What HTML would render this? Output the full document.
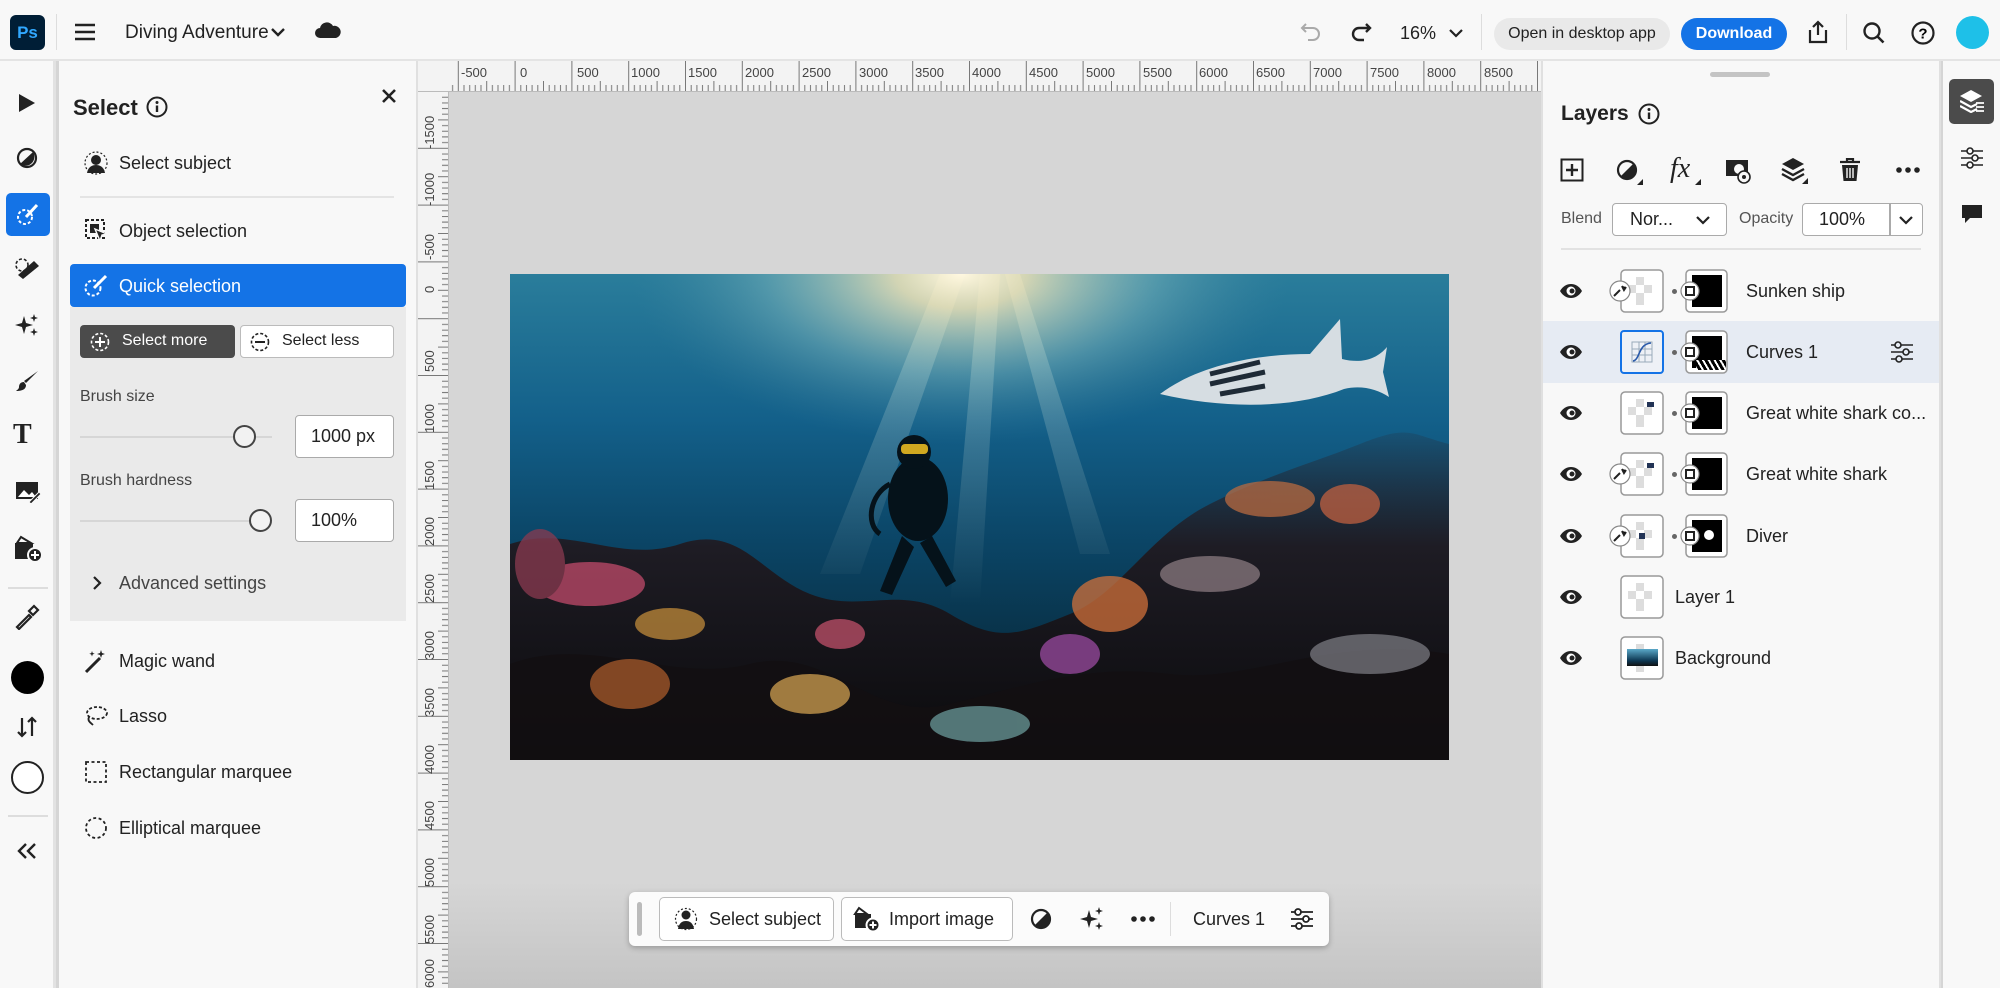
<!DOCTYPE html>
<html><head><meta charset="utf-8"><style>
*{box-sizing:border-box;margin:0;padding:0}
body{width:2000px;height:988px;overflow:hidden;background:#d5d5d5;font-family:"Liberation Sans",sans-serif;color:#222;position:relative}
.a{position:absolute}
.t{font-size:18px;color:#222;white-space:nowrap}
svg{display:block}
.ic{position:absolute}
</style></head><body>

<!-- top bar -->
<div class="a" style="left:0;top:0;width:2000px;height:61px;background:#f8f8f8;border-bottom:2px solid #e4e4e4"></div>
<div class="a" style="left:10px;top:15px;width:35px;height:35px;background:#001e36;border-radius:6px;color:#31a8ff;font-weight:bold;font-size:17px;line-height:35px;text-align:center">Ps</div>
<div class="a" style="left:56px;top:14px;width:1px;height:36px;background:#ddd"></div>
<svg class="ic" style="left:74px;top:22px" width="22" height="20"><path d="M1 3h20M1 10h20M1 17h20" stroke="#222" stroke-width="2.4"/></svg>
<div class="a t" style="left:125px;top:22px;font-size:19px">Diving Adventure</div>
<svg class="ic" style="left:271px;top:27px" width="14" height="10"><path d="M1 2l6 6 6-6" stroke="#222" stroke-width="2.4" fill="none"/></svg>
<svg class="ic" style="left:315px;top:21px" width="26" height="18"><path d="M5 17a5 5 0 010-10a7 7 0 0113-2a5 5 0 013 12z" fill="#222"/></svg>

<svg class="ic" style="left:1300px;top:22px" width="22" height="20"><path d="M6 2L2 6l4 4M2 6h11a6 6 0 010 12H8" stroke="#aaa" stroke-width="2" fill="none"/></svg>
<svg class="ic" style="left:1350px;top:22px" width="22" height="20"><path d="M16 2l4 4-4 4M20 6H9a6 6 0 000 12h5" stroke="#222" stroke-width="2.4" fill="none"/></svg>
<div class="a t" style="left:1400px;top:23px">16%</div>
<svg class="ic" style="left:1449px;top:28px" width="14" height="10"><path d="M1 2l6 6 6-6" stroke="#222" stroke-width="2.2" fill="none"/></svg>
<div class="a" style="left:1481px;top:14px;width:1px;height:36px;background:#ddd"></div>
<div class="a" style="left:1494px;top:18px;width:176px;height:32px;background:#e9e9e9;border-radius:16px;font-size:16px;line-height:32px;text-align:center;color:#222">Open in desktop app</div>
<div class="a" style="left:1681px;top:18px;width:106px;height:32px;background:#1473e6;border-radius:16px;font-size:16px;line-height:32px;text-align:center;color:#fff;font-weight:bold">Download</div>
<svg class="ic" style="left:1806px;top:20px" width="24" height="24"><path d="M12 15V2M7 7l5-5 5 5M4 10v12h16V10" stroke="#222" stroke-width="2.2" fill="none"/></svg>
<div class="a" style="left:1846px;top:14px;width:1px;height:36px;background:#ddd"></div>
<svg class="ic" style="left:1862px;top:21px" width="24" height="24"><circle cx="10" cy="10" r="7.5" stroke="#222" stroke-width="2.4" fill="none"/><path d="M15.5 15.5l6 6" stroke="#222" stroke-width="2.6"/></svg>
<svg class="ic" style="left:1911px;top:21px" width="24" height="24"><circle cx="12" cy="12" r="10.5" stroke="#222" stroke-width="2.2" fill="none"/><text x="12" y="17.5" font-size="15" font-weight="bold" text-anchor="middle" font-family="Liberation Sans">?</text></svg>
<div class="a" style="left:1956px;top:16px;width:33px;height:33px;border-radius:50%;background:#1ec0e8"></div>

<!-- left toolbar -->
<div class="a" style="left:0;top:61px;width:56px;height:927px;background:#f8f8f8;border-right:3px solid #e2e2e2"></div>
<div class="a" style="left:6px;top:193px;width:44px;height:43px;background:#1473e6;border-radius:5px"></div>
<svg class="ic" style="left:16px;top:92px" width="22" height="22"><path d="M3 2l16 9-16 9z" fill="#222"/></svg>
<svg class="ic" style="left:15px;top:147px" width="24" height="22"><circle cx="12" cy="11" r="9" stroke="#222" stroke-width="2.2" fill="none"/><path d="M5 17L18 5a9 9 0 01-13 12z" fill="#222"/></svg>
<svg class="ic" style="left:15px;top:202px" width="26" height="26"><circle cx="10" cy="15" r="7" stroke="#fff" stroke-width="2" stroke-dasharray="3 2" fill="none"/><path d="M22 3L11 15" stroke="#fff" stroke-width="3"/></svg>
<svg class="ic" style="left:14px;top:257px" width="28" height="24"><path d="M4 18L20 4l5 5L9 22z" fill="#222"/><circle cx="8" cy="8" r="6" stroke="#222" stroke-width="1.6" stroke-dasharray="3 2" fill="none"/></svg>
<svg class="ic" style="left:15px;top:313px" width="26" height="24"><path d="M9 3l2 7 7 2-7 2-2 7-2-7-7-2 7-2z M19 1l1 3 3 1-3 1-1 3-1-3-3-1 3-1z M19 15l1 3 3 1-3 1-1 3-1-3-3-1 3-1z" fill="#222"/></svg>
<svg class="ic" style="left:15px;top:369px" width="26" height="24"><path d="M23 2L11 14l-2-2z M9 13c-4 0-5 3-5 5s-2 3-3 4c5 0 10-1 10-6z" fill="#222"/></svg>
<div class="a" style="left:13px;top:419px;font-family:'Liberation Serif',serif;font-weight:bold;font-size:28px;color:#222">T</div>
<svg class="ic" style="left:14px;top:479px" width="28" height="24"><rect x="2" y="3" width="22" height="17" fill="#222"/><path d="M4 18l6-7 5 5 3-3 4 5z" fill="#fff"/><path d="M15 23l10-10 2 2-10 10z" fill="#222" stroke="#f8f8f8"/></svg>
<svg class="ic" style="left:13px;top:535px" width="30" height="28"><path d="M2 8h18v16H2z" fill="#222"/><path d="M8 2l10 6H4z" fill="none" stroke="#222" stroke-width="2"/><circle cx="22" cy="20" r="7" fill="#222" stroke="#f8f8f8" stroke-width="2"/><path d="M22 16v8M18 20h8" stroke="#fff" stroke-width="2"/></svg>
<div class="a" style="left:8px;top:587px;width:40px;height:2px;background:#ddd"></div>
<svg class="ic" style="left:14px;top:604px" width="26" height="26"><path d="M3 23l12-12 2 2L5 25zM15 7l4 4 5-5-4-4z" fill="none" stroke="#222" stroke-width="2.2"/></svg>
<div class="a" style="left:11px;top:661px;width:33px;height:33px;border-radius:50%;background:#000"></div>
<svg class="ic" style="left:16px;top:716px" width="22" height="22"><path d="M6 2v18M2 16l4 4 4-4M16 20V2M12 6l4-4 4 4" stroke="#222" stroke-width="2.2" fill="none"/></svg>
<div class="a" style="left:11px;top:761px;width:33px;height:33px;border-radius:50%;border:2px solid #222;background:#fff"></div>
<div class="a" style="left:8px;top:815px;width:40px;height:2px;background:#ddd"></div>
<svg class="ic" style="left:16px;top:842px" width="22" height="18"><path d="M10 2L3 9l7 7M19 2l-7 7 7 7" stroke="#222" stroke-width="2.4" fill="none"/></svg>

<!-- select panel -->
<div class="a" style="left:59px;top:61px;width:359px;height:927px;background:#f8f8f8;border-right:2px solid #e0e0e0"></div>
<div class="a" style="left:73px;top:95px;font-size:22px;font-weight:bold;color:#222">Select</div>
<svg class="ic" style="left:146px;top:96px" width="22" height="22"><circle cx="11" cy="11" r="9.5" stroke="#222" stroke-width="2" fill="none"/><circle cx="11" cy="6.5" r="1.5" fill="#222"/><path d="M11 9.5v6.5" stroke="#222" stroke-width="2.4"/></svg>
<svg class="ic" style="left:381px;top:88px" width="16" height="16"><path d="M2 2l12 12M14 2L2 14" stroke="#222" stroke-width="2.6"/></svg>

<svg class="ic" style="left:83px;top:151px" width="26" height="24"><circle cx="13" cy="9" r="5" fill="#222"/><path d="M4 22c1-6 5-8 9-8s8 2 9 8z" fill="#222"/><circle cx="13" cy="12" r="11" stroke="#222" stroke-width="1.2" stroke-dasharray="2 2" fill="none"/></svg>
<div class="a t" style="left:119px;top:153px">Select subject</div>
<div class="a" style="left:80px;top:196px;width:314px;height:2px;background:#e4e4e4"></div>
<svg class="ic" style="left:84px;top:218px" width="26" height="26"><rect x="2" y="2" width="18" height="18" stroke="#222" stroke-width="2" stroke-dasharray="3 2" fill="none"/><rect x="6" y="6" width="9" height="9" fill="#222"/><path d="M11 11l12 5-5 1-2 6z" fill="#222" stroke="#f8f8f8" stroke-width="1.4"/></svg>
<div class="a t" style="left:119px;top:221px">Object selection</div>

<div class="a" style="left:70px;top:264px;width:336px;height:43px;background:#1473e6;border-radius:4px"></div>
<svg class="ic" style="left:83px;top:273px" width="26" height="26"><circle cx="10" cy="15" r="7.5" stroke="#fff" stroke-width="2" stroke-dasharray="3 2" fill="none"/><path d="M23 3L11 15" stroke="#fff" stroke-width="3"/></svg>
<div class="a t" style="left:119px;top:276px;color:#fff">Quick selection</div>
<div class="a" style="left:70px;top:307px;width:336px;height:314px;background:#eaeaea"></div>
<div class="a" style="left:80px;top:325px;width:155px;height:33px;background:#4b4b4b;border-radius:4px"></div>
<svg class="ic" style="left:90px;top:332px" width="20" height="20"><circle cx="10" cy="10" r="8.5" stroke="#fff" stroke-width="1.6" stroke-dasharray="3 2" fill="none"/><path d="M10 5v10M5 10h10" stroke="#fff" stroke-width="2"/></svg>
<div class="a" style="left:122px;top:332px;font-size:16px;color:#fff">Select more</div>
<div class="a" style="left:240px;top:325px;width:154px;height:33px;background:#fff;border:1.5px solid #bbb;border-radius:4px"></div>
<svg class="ic" style="left:250px;top:332px" width="20" height="20"><circle cx="10" cy="10" r="8.5" stroke="#222" stroke-width="1.6" stroke-dasharray="3 2" fill="none"/><path d="M5 10h10" stroke="#222" stroke-width="2"/></svg>
<div class="a" style="left:282px;top:332px;font-size:16px;color:#222">Select less</div>

<div class="a" style="left:80px;top:388px;font-size:16px;color:#444">Brush size</div>
<div class="a" style="left:80px;top:436px;width:192px;height:2px;background:#d6d6d6"></div>
<div class="a" style="left:233px;top:425px;width:23px;height:23px;border-radius:50%;border:2.5px solid #444;background:#f2f2f2"></div>
<div class="a" style="left:295px;top:415px;width:99px;height:43px;background:#fff;border:1.5px solid #aaa;border-radius:4px;font-size:18px;line-height:40px;padding-left:15px">1000 px</div>
<div class="a" style="left:80px;top:472px;font-size:16px;color:#444">Brush hardness</div>
<div class="a" style="left:80px;top:520px;width:180px;height:2px;background:#d6d6d6"></div>
<div class="a" style="left:249px;top:509px;width:23px;height:23px;border-radius:50%;border:2.5px solid #444;background:#f2f2f2"></div>
<div class="a" style="left:295px;top:499px;width:99px;height:43px;background:#fff;border:1.5px solid #aaa;border-radius:4px;font-size:18px;line-height:40px;padding-left:15px">100%</div>
<svg class="ic" style="left:92px;top:575px" width="10" height="16"><path d="M2 2l6 6-6 6" stroke="#222" stroke-width="2.2" fill="none"/></svg>
<div class="a t" style="left:119px;top:573px;color:#444">Advanced settings</div>

<svg class="ic" style="left:83px;top:648px" width="26" height="26"><path d="M3 24L17 10" stroke="#222" stroke-width="3"/><path d="M18 2l1 3 3 1-3 1-1 3-1-3-3-1 3-1z M9 3l.7 2 2 .7-2 .7L9 8.5l-.7-2-2-.7 2-.7z" fill="#222"/></svg>
<div class="a t" style="left:119px;top:651px">Magic wand</div>
<svg class="ic" style="left:83px;top:704px" width="26" height="24"><ellipse cx="14" cy="9" rx="10" ry="6" stroke="#222" stroke-width="1.8" stroke-dasharray="3 2" fill="none"/><path d="M6 13c-2 4 2 6 4 8" stroke="#222" stroke-width="1.8" fill="none"/></svg>
<div class="a t" style="left:119px;top:706px">Lasso</div>
<svg class="ic" style="left:84px;top:760px" width="24" height="24"><rect x="2" y="2" width="20" height="20" stroke="#222" stroke-width="1.8" stroke-dasharray="3 2.5" fill="none"/></svg>
<div class="a t" style="left:119px;top:762px">Rectangular marquee</div>
<svg class="ic" style="left:84px;top:816px" width="24" height="24"><circle cx="12" cy="12" r="10" stroke="#222" stroke-width="1.8" stroke-dasharray="3 2.5" fill="none"/></svg>
<div class="a t" style="left:119px;top:818px">Elliptical marquee</div>

<!-- rulers -->
<div class="a" style="left:418px;top:61px;width:1123px;height:31px;background:#f3f3f3;border-bottom:1px solid #bbb;overflow:hidden">
<svg width="1123" height="31" style="position:absolute;left:0;top:0">
<defs><pattern id="rh" x="-17" y="0" width="56.8" height="31" patternUnits="userSpaceOnUse"><path d="M0.5 0v31M6.2 24v7M11.9 24v7M17.5 24v7M23.2 24v7M28.9 20v11M34.6 24v7M40.2 24v7M45.9 24v7M51.6 24v7" stroke="#777" stroke-width="1"/></pattern></defs>
<rect width="1123" height="31" fill="url(#rh)"/>
<g font-size="13" fill="#444" font-family="Liberation Sans">
<text x="43" y="16">-500</text><text x="102" y="16">0</text><text x="159" y="16">500</text><text x="213" y="16">1000</text><text x="270" y="16">1500</text><text x="327" y="16">2000</text><text x="384" y="16">2500</text><text x="441" y="16">3000</text><text x="497" y="16">3500</text><text x="554" y="16">4000</text><text x="611" y="16">4500</text><text x="668" y="16">5000</text><text x="725" y="16">5500</text><text x="781" y="16">6000</text><text x="838" y="16">6500</text><text x="895" y="16">7000</text><text x="952" y="16">7500</text><text x="1009" y="16">8000</text><text x="1066" y="16">8500</text></g>
<rect x="0" y="0" width="31" height="31" fill="#f3f3f3"/></svg></div>
<div class="a" style="left:418px;top:92px;width:31px;height:896px;background:#f3f3f3;border-right:1px solid #bbb;overflow:hidden">
<svg width="31" height="896" style="position:absolute;left:0;top:0">
<defs><pattern id="rv" x="0" y="-1" width="31" height="56.8" patternUnits="userSpaceOnUse"><path d="M0 0.5h31M24 6.2h7M24 11.9h7M24 17.5h7M24 23.2h7M20 28.9h11M24 34.6h7M24 40.2h7M24 45.9h7M24 51.6h7" stroke="#777" stroke-width="1"/></pattern></defs>
<rect width="31" height="896" fill="url(#rv)"/>
<g font-size="13" fill="#444" font-family="Liberation Sans">
<text transform="translate(16,57) rotate(-90)">-1500</text><text transform="translate(16,114) rotate(-90)">-1000</text><text transform="translate(16,168) rotate(-90)">-500</text><text transform="translate(16,201) rotate(-90)">0</text><text transform="translate(16,280) rotate(-90)">500</text><text transform="translate(16,341) rotate(-90)">1000</text><text transform="translate(16,398) rotate(-90)">1500</text><text transform="translate(16,454) rotate(-90)">2000</text><text transform="translate(16,511) rotate(-90)">2500</text><text transform="translate(16,568) rotate(-90)">3000</text><text transform="translate(16,625) rotate(-90)">3500</text><text transform="translate(16,682) rotate(-90)">4000</text><text transform="translate(16,738) rotate(-90)">4500</text><text transform="translate(16,795) rotate(-90)">5000</text><text transform="translate(16,852) rotate(-90)">5500</text><text transform="translate(16,896) rotate(-90)">6000</text></g></svg></div>
<div class="a" style="left:449px;top:92px;width:1092px;height:896px;background:linear-gradient(#d6d6d6 0,#d6d6d6 88%,#c4c4c4 100%)"></div>

<!-- image -->
<svg class="ic" style="left:510px;top:274px" width="939" height="486">
<defs>
<linearGradient id="sea" x1="0" y1="0" x2="0" y2="1"><stop offset="0" stop-color="#2a7d9b"/><stop offset=".3" stop-color="#13608a"/><stop offset=".55" stop-color="#0b4566"/><stop offset="1" stop-color="#051a24"/></linearGradient>
<radialGradient id="sun" cx=".48" cy="0" r=".35"><stop offset="0" stop-color="#fff8e0" stop-opacity="1"/><stop offset=".2" stop-color="#f0e4b8" stop-opacity=".85"/><stop offset=".6" stop-color="#9ccbc8" stop-opacity=".35"/><stop offset="1" stop-color="#4b8aa0" stop-opacity="0"/></radialGradient>
<linearGradient id="ray" x1="0" y1="0" x2="0" y2="1"><stop offset="0" stop-color="#e8f0e0" stop-opacity=".35"/><stop offset="1" stop-color="#e8f0e0" stop-opacity="0"/></linearGradient>
<linearGradient id="reef" x1="0" y1="0" x2="0" y2="1"><stop offset="0" stop-color="#2a2630" stop-opacity=".2"/><stop offset=".35" stop-color="#1e1c24"/><stop offset="1" stop-color="#0a0a0c"/></linearGradient>
</defs>
<rect width="939" height="486" fill="url(#sea)"/>
<path d="M430 0l-120 300h40L455 0zM470 0l-30 330h30L490 0zM510 0l90 280h-30L495 0z" fill="url(#ray)"/>
<rect width="939" height="486" fill="url(#sun)"/>
<path d="M0 486V270c60-20 110 20 170 0s80 30 130 50 90-10 140 20 70 20 120 0 80-80 140-110 100-40 150-60 50-10 89 0V486z" fill="url(#reef)"/>
<path d="M0 486V390c80-30 160 20 240 0s120 60 200 40 140-40 220-30 160-40 279-20V486z" fill="#130f12" opacity=".85"/>
<g opacity=".75">
<ellipse cx="80" cy="310" rx="55" ry="22" fill="#c04a6a"/>
<ellipse cx="30" cy="290" rx="25" ry="35" fill="#8a3a50"/>
<ellipse cx="160" cy="350" rx="35" ry="16" fill="#c08a3a"/>
<ellipse cx="120" cy="410" rx="40" ry="25" fill="#a85a2a"/>
<ellipse cx="300" cy="420" rx="40" ry="20" fill="#d0a050"/>
<ellipse cx="330" cy="360" rx="25" ry="15" fill="#c0506a"/>
<ellipse cx="600" cy="330" rx="38" ry="28" fill="#d0703a"/>
<ellipse cx="560" cy="380" rx="30" ry="20" fill="#9a4aa0"/>
<ellipse cx="760" cy="225" rx="45" ry="18" fill="#b86a40"/>
<ellipse cx="840" cy="230" rx="30" ry="20" fill="#c06040"/>
<ellipse cx="700" cy="300" rx="50" ry="18" fill="#8a7a80"/>
<ellipse cx="470" cy="450" rx="50" ry="18" fill="#6a9a9a"/>
<ellipse cx="860" cy="380" rx="60" ry="20" fill="#7a7a80"/>
</g>
<g fill="#05121a"><ellipse cx="408" cy="225" rx="30" ry="42"/><circle cx="404" cy="178" r="17"/><path d="M392 262l-22 55 12 4 22-48zM422 262l24 45-10 6-26-44z"/><path d="M380 210c-20 10-25 40-10 50" stroke="#05121a" stroke-width="5" fill="none"/></g>
<rect x="391" y="170" width="27" height="10" rx="4" fill="#d0a820"/>
<path d="M650 120c40-30 100-40 150-40l30-35 2 40c20 5 35 0 45-12l-4 25 6 25c-12-8-28-12-45-8-50 20-120 20-184 5z" fill="#d6dde2"/>
<path d="M700 100l50-12M700 110l55-12M710 120l45-8" stroke="#1e2a36" stroke-width="5"/>
</svg>

<!-- bottom toolbar -->
<div class="a" style="left:629px;top:892px;width:700px;height:54px;background:#fbfbfb;border-radius:6px;box-shadow:0 2px 6px rgba(0,0,0,.25)"></div>
<div class="a" style="left:637px;top:902px;width:5px;height:34px;background:#bbb;border-radius:3px"></div>
<div class="a" style="left:659px;top:897px;width:175px;height:44px;border:1.5px solid #bbb;border-radius:5px;background:#fff"></div>
<svg class="ic" style="left:674px;top:907px" width="24" height="24"><circle cx="12" cy="8" r="4.5" fill="#222"/><path d="M4 22c1-6 4-8 8-8s7 2 8 8z" fill="#222"/><circle cx="12" cy="12" r="10.5" stroke="#222" stroke-width="1.2" stroke-dasharray="2 2" fill="none"/></svg>
<div class="a t" style="left:709px;top:909px">Select subject</div>
<div class="a" style="left:841px;top:897px;width:172px;height:44px;border:1.5px solid #bbb;border-radius:5px;background:#fff"></div>
<svg class="ic" style="left:853px;top:905px" width="28" height="28"><path d="M2 9h16v14H2z" fill="#222"/><path d="M6 3l8 6H2z" fill="none" stroke="#222" stroke-width="2"/><circle cx="20" cy="20" r="6.5" fill="#222" stroke="#fff" stroke-width="2"/><path d="M20 16.5v7M16.5 20h7" stroke="#fff" stroke-width="2"/></svg>
<div class="a t" style="left:889px;top:909px">Import image</div>
<svg class="ic" style="left:1030px;top:908px" width="22" height="22"><circle cx="11" cy="11" r="9" stroke="#222" stroke-width="2.2" fill="none"/><path d="M4.6 17.4L17.4 4.6a9 9 0 01-12.8 12.8z" fill="#222"/></svg>
<svg class="ic" style="left:1079px;top:906px" width="26" height="26"><path d="M10 4l2 7 7 2-7 2-2 7-2-7-7-2 7-2z M20 1l1 3 3 1-3 1-1 3-1-3-3-1 3-1z M20 16l1 3 3 1-3 1-1 3-1-3-3-1 3-1z" fill="#222"/></svg>
<svg class="ic" style="left:1131px;top:916px" width="24" height="6"><circle cx="3" cy="3" r="2.8" fill="#222"/><circle cx="12" cy="3" r="2.8" fill="#222"/><circle cx="21" cy="3" r="2.8" fill="#222"/></svg>
<div class="a" style="left:1170px;top:902px;width:1px;height:34px;background:#ddd"></div>
<div class="a t" style="left:1193px;top:909px">Curves 1</div>
<svg class="ic" style="left:1290px;top:908px" width="24" height="22"><path d="M1 4h22M1 11h22M1 18h22" stroke="#222" stroke-width="1.8"/><circle cx="8" cy="4" r="3" fill="#fff" stroke="#222" stroke-width="1.8"/><circle cx="16" cy="11" r="3" fill="#fff" stroke="#222" stroke-width="1.8"/><circle cx="9" cy="18" r="3" fill="#fff" stroke="#222" stroke-width="1.8"/></svg>

<!-- layers panel -->
<div class="a" style="left:1541px;top:61px;width:400px;height:927px;background:#f8f8f8;border-left:2px solid #e0e0e0;border-right:2px solid #e0e0e0"></div>
<div class="a" style="left:1710px;top:72px;width:60px;height:5px;background:#c4c4c4;border-radius:3px"></div>
<div class="a" style="left:1561px;top:102px;font-size:21px;font-weight:bold;color:#222">Layers</div>
<svg class="ic" style="left:1638px;top:103px" width="22" height="22"><circle cx="11" cy="11" r="9.5" stroke="#222" stroke-width="2" fill="none"/><circle cx="11" cy="6.5" r="1.5" fill="#222"/><path d="M11 9.5v6.5" stroke="#222" stroke-width="2.4"/></svg>

<svg class="ic" style="left:1560px;top:158px" width="24" height="24"><rect x="1.5" y="1.5" width="21" height="21" stroke="#222" stroke-width="2" fill="none"/><path d="M12 6v12M6 12h12" stroke="#222" stroke-width="2.4"/></svg>
<svg class="ic" style="left:1616px;top:159px" width="28" height="26"><circle cx="11" cy="11" r="9" stroke="#222" stroke-width="2.2" fill="none"/><path d="M4.6 17.4L17.4 4.6a9 9 0 01-12.8 12.8z" fill="#222"/><path d="M27 20v6h-6z" fill="#222"/></svg>
<div class="a" style="left:1670px;top:153px;font-family:'Liberation Serif',serif;font-style:italic;font-size:28px;color:#222">fx</div>
<svg class="ic" style="left:1694px;top:178px" width="8" height="8"><path d="M7 1v6H1z" fill="#222"/></svg>
<svg class="ic" style="left:1725px;top:158px" width="28" height="26"><rect x="1" y="2" width="22" height="16" fill="#222"/><circle cx="14" cy="11" r="5" fill="#f8f8f8"/><circle cx="19" cy="19" r="6" fill="#f8f8f8" stroke="#222" stroke-width="1.6"/><circle cx="19" cy="19" r="2" fill="#222"/></svg>
<svg class="ic" style="left:1781px;top:157px" width="28" height="28"><path d="M12 1l11 6-11 6L1 7z" fill="#222"/><path d="M1 12l11 6 11-6M1 17l11 6 11-6" stroke="#222" stroke-width="2.4" fill="none"/><path d="M27 21v6h-6z" fill="#222"/></svg>
<svg class="ic" style="left:1839px;top:158px" width="22" height="24"><path d="M1 4h20M8 4V1h6v3" stroke="#222" stroke-width="2.2" fill="none"/><path d="M3 7h16l-1.5 16h-13z" fill="#222"/><path d="M8 10v10M11 10v10M14 10v10" stroke="#f8f8f8" stroke-width="1.4"/></svg>
<svg class="ic" style="left:1896px;top:167px" width="24" height="6"><circle cx="3" cy="3" r="2.8" fill="#222"/><circle cx="12" cy="3" r="2.8" fill="#222"/><circle cx="21" cy="3" r="2.8" fill="#222"/></svg>

<div class="a" style="left:1561px;top:210px;font-size:16px;color:#555">Blend</div>
<div class="a" style="left:1612px;top:203px;width:115px;height:33px;border:1.5px solid #aaa;border-radius:4px;background:#fff;font-size:18px;line-height:31px;padding-left:17px">Nor...</div>
<svg class="ic" style="left:1696px;top:215px" width="14" height="10"><path d="M1 2l6 6 6-6" stroke="#222" stroke-width="2.2" fill="none"/></svg>
<div class="a" style="left:1739px;top:210px;font-size:16px;color:#555">Opacity</div>
<div class="a" style="left:1802px;top:203px;width:121px;height:33px;border:1.5px solid #aaa;border-radius:4px;background:#fff;font-size:18px;line-height:31px;padding-left:16px">100%</div>
<div class="a" style="left:1889px;top:204px;width:1.5px;height:31px;background:#aaa"></div>
<svg class="ic" style="left:1899px;top:215px" width="14" height="10"><path d="M1 2l6 6 6-6" stroke="#222" stroke-width="2.2" fill="none"/></svg>
<div class="a" style="left:1561px;top:248px;width:360px;height:2px;background:#e2e2e2"></div>

<div class="a" style="left:1543px;top:321px;width:396px;height:62px;background:#e6ebf3"></div>

<svg width="0" height="0" style="position:absolute"><defs>
<symbol id="eye" viewBox="0 0 24 16"><path d="M1 8c3-5 7-7 11-7s8 2 11 7c-3 5-7 7-11 7S4 13 1 8z" fill="#222"/><circle cx="12" cy="8" r="4.5" fill="#fff"/><circle cx="13" cy="8" r="2.5" fill="#222"/></symbol>
<symbol id="chk" viewBox="0 0 44 44"><rect x="1" y="1" width="42" height="42" rx="4" fill="#fff" stroke="#999" stroke-width="1.5"/><rect x="16" y="8" width="8" height="8" fill="#ddd"/><rect x="8" y="16" width="8" height="8" fill="#ddd"/><rect x="24" y="16" width="8" height="8" fill="#ddd"/><rect x="16" y="24" width="8" height="8" fill="#ddd"/><rect x="16" y="32" width="8" height="4" fill="#ddd"/></symbol>
<symbol id="msk" viewBox="0 0 48 44"><rect x="6" y="1" width="41" height="42" rx="4" fill="#fff" stroke="#999" stroke-width="1.5"/><rect x="12" y="6" width="30" height="32" fill="#000"/><circle cx="10" cy="22" r="9" fill="#fff" stroke="#888" stroke-width="1.2"/><rect x="6" y="18" width="8" height="8" fill="none" stroke="#222" stroke-width="2"/></symbol>
<symbol id="lnk" viewBox="0 0 22 22"><circle cx="11" cy="11" r="10" fill="#fff" stroke="#888" stroke-width="1.2"/><path d="M5 16l6-6M13 6l2 4 2-3" stroke="#222" stroke-width="2"/></symbol>
</defs></svg>

<!-- rows -->
<svg class="ic" style="left:1559px;top:283px" width="24" height="16"><use href="#eye"/></svg>
<svg class="ic" style="left:1620px;top:269px" width="44" height="44"><use href="#chk"/></svg>
<svg class="ic" style="left:1609px;top:280px" width="22" height="22"><use href="#lnk"/></svg>
<div class="a" style="left:1672px;top:289px;width:5px;height:5px;border-radius:50%;background:#666"></div>
<svg class="ic" style="left:1680px;top:269px" width="48" height="44"><use href="#msk"/></svg>
<div class="a t" style="left:1746px;top:281px">Sunken ship</div>

<svg class="ic" style="left:1559px;top:344px" width="24" height="16"><use href="#eye"/></svg>
<div class="a" style="left:1620px;top:330px;width:44px;height:44px;border:2.5px solid #1473e6;border-radius:4px;background:#eef1f6"></div>
<svg class="ic" style="left:1630px;top:340px" width="24" height="24"><path d="M2 2h20v20H2zM9 2v20M15 2v20M2 9h20M2 15h20" stroke="#9ab" stroke-width="1" fill="none"/><path d="M3 21C10 20 8 4 21 3" stroke="#2a5aaa" stroke-width="1.6" fill="none"/></svg>
<div class="a" style="left:1672px;top:350px;width:5px;height:5px;border-radius:50%;background:#666"></div>
<svg class="ic" style="left:1680px;top:330px" width="48" height="44"><use href="#msk"/></svg>
<div class="a" style="left:1696px;top:360px;width:30px;height:10px;background:repeating-linear-gradient(60deg,#fff 0 2px,#000 2px 5px)"></div>
<div class="a t" style="left:1746px;top:342px">Curves 1</div>
<svg class="ic" style="left:1890px;top:341px" width="24" height="22"><path d="M1 4h22M1 11h22M1 18h22" stroke="#222" stroke-width="1.6"/><circle cx="8" cy="4" r="3" fill="#e6ebf3" stroke="#222" stroke-width="1.6"/><circle cx="16" cy="11" r="3" fill="#e6ebf3" stroke="#222" stroke-width="1.6"/><circle cx="9" cy="18" r="3" fill="#e6ebf3" stroke="#222" stroke-width="1.6"/></svg>

<svg class="ic" style="left:1559px;top:405px" width="24" height="16"><use href="#eye"/></svg>
<svg class="ic" style="left:1620px;top:391px" width="44" height="44"><use href="#chk"/></svg>
<div class="a" style="left:1647px;top:402px;width:7px;height:5px;background:#235"></div>
<div class="a" style="left:1672px;top:411px;width:5px;height:5px;border-radius:50%;background:#666"></div>
<svg class="ic" style="left:1680px;top:391px" width="48" height="44"><use href="#msk"/></svg>
<div class="a t" style="left:1746px;top:403px">Great white shark co...</div>

<svg class="ic" style="left:1559px;top:466px" width="24" height="16"><use href="#eye"/></svg>
<svg class="ic" style="left:1620px;top:452px" width="44" height="44"><use href="#chk"/></svg>
<svg class="ic" style="left:1609px;top:463px" width="22" height="22"><use href="#lnk"/></svg>
<div class="a" style="left:1647px;top:463px;width:7px;height:5px;background:#235"></div>
<div class="a" style="left:1672px;top:472px;width:5px;height:5px;border-radius:50%;background:#666"></div>
<svg class="ic" style="left:1680px;top:452px" width="48" height="44"><use href="#msk"/></svg>
<div class="a t" style="left:1746px;top:464px">Great white shark</div>

<svg class="ic" style="left:1559px;top:528px" width="24" height="16"><use href="#eye"/></svg>
<svg class="ic" style="left:1620px;top:514px" width="44" height="44"><use href="#chk"/></svg>
<svg class="ic" style="left:1609px;top:525px" width="22" height="22"><use href="#lnk"/></svg>
<div class="a" style="left:1639px;top:533px;width:6px;height:6px;background:#235"></div>
<div class="a" style="left:1672px;top:534px;width:5px;height:5px;border-radius:50%;background:#666"></div>
<svg class="ic" style="left:1680px;top:514px" width="48" height="44"><use href="#msk"/></svg>
<div class="a" style="left:1704px;top:530px;width:10px;height:10px;border-radius:50%;background:#fff"></div>
<div class="a t" style="left:1746px;top:526px">Diver</div>

<svg class="ic" style="left:1559px;top:589px" width="24" height="16"><use href="#eye"/></svg>
<svg class="ic" style="left:1620px;top:575px" width="44" height="44"><use href="#chk"/></svg>
<div class="a t" style="left:1675px;top:587px">Layer 1</div>

<svg class="ic" style="left:1559px;top:650px" width="24" height="16"><use href="#eye"/></svg>
<svg class="ic" style="left:1620px;top:636px" width="44" height="44"><use href="#chk"/></svg>
<div class="a" style="left:1627px;top:649px;width:31px;height:17px;background:linear-gradient(#5aa8c8,#0c3550 70%,#111)"></div>
<div class="a t" style="left:1675px;top:648px">Background</div>

<!-- right strip -->
<div class="a" style="left:1943px;top:61px;width:57px;height:927px;background:#f8f8f8"></div>
<div class="a" style="left:1949px;top:79px;width:45px;height:45px;background:#4b4b4b;border-radius:5px"></div>
<svg class="ic" style="left:1960px;top:89px" width="24" height="24"><path d="M11 1l11 6-11 6L0 7z" fill="#fff"/><path d="M0 12l11 6 6-3M0 17l11 6 6-3" stroke="#fff" stroke-width="2.2" fill="none"/><path d="M16 14h8M16 18h8M16 22h8" stroke="#fff" stroke-width="1.8"/></svg>
<svg class="ic" style="left:1960px;top:147px" width="24" height="22"><path d="M1 4h22M1 11h22M1 18h22" stroke="#222" stroke-width="1.6"/><circle cx="10" cy="4" r="3" fill="#f8f8f8" stroke="#222" stroke-width="1.6"/><circle cx="15" cy="11" r="3" fill="#f8f8f8" stroke="#222" stroke-width="1.6"/><circle cx="10" cy="18" r="3" fill="#f8f8f8" stroke="#222" stroke-width="1.6"/></svg>
<svg class="ic" style="left:1961px;top:203px" width="22" height="22"><path d="M1 2h20v13H9l-5 5v-5H1z" fill="#222"/></svg>
</body></html>
